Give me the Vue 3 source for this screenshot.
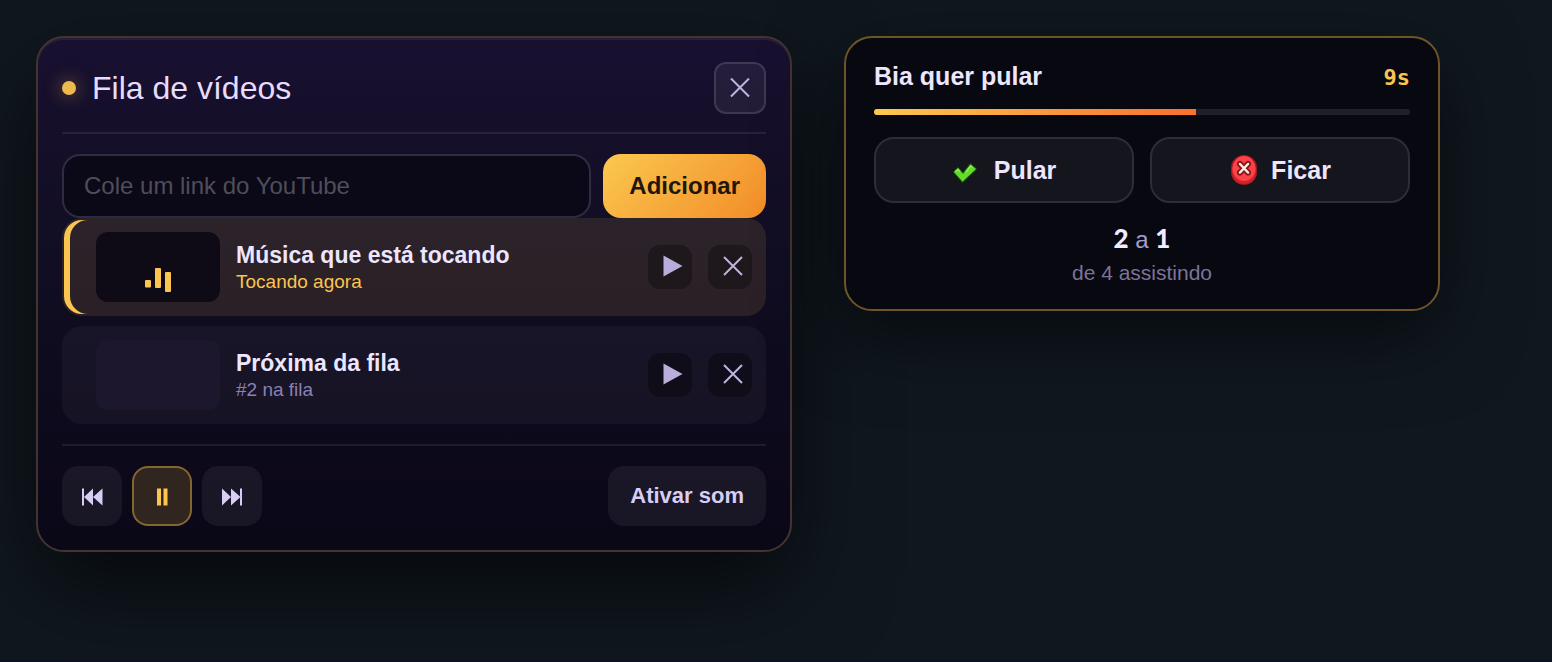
<script setup>
import { ref } from 'vue'

const link = ref('')
const videos = [
  { id: 1, title: 'Música que está tocando', note: 'Tocando agora', playing: true },
  { id: 2, title: 'Próxima da fila', note: '#2 na fila', playing: false },
]
const share = 60
</script>

<template>
  <main class="stage">
    <section class="card queue" aria-labelledby="queue-title">
      <header class="head">
        <span class="dot"></span>
        <h1 id="queue-title">Fila de vídeos</h1>
        <button class="close" type="button" aria-label="Fechar">
          <svg width="20" height="20" viewBox="0 0 20 20"><path class="cross" d="M1 .5 19 18.500M19 .5 1 18.500" /></svg>
        </button>
      </header>

      <form class="add" @submit.prevent>
        <input v-model="link" type="text" placeholder="Cole um link do YouTube" aria-label="Link do YouTube" />
        <button type="submit">Adicionar</button>
      </form>

      <ul class="list">
        <li v-for="v in videos" :key="v.id" class="item" :class="{ playing: v.playing }">
          <div class="thumb">
            <svg v-if="v.playing" width="26" height="24" viewBox="0 0 26 24">
              <rect x="0" y="12" width="6" height="7.500" rx="1" />
              <rect x="10" y="0" width="6" height="20" rx="1" />
              <rect x="20" y="4" width="6" height="20" rx="1" />
            </svg>
          </div>
          <div class="info">
            <p class="title">{{ v.title }}</p>
            <p class="note">{{ v.note }}</p>
          </div>
          <button class="mini" type="button" aria-label="Tocar">
            <svg width="20" height="22" viewBox="0 0 20 22"><path class="solid" d="M.5 0.500V21.500L19.500 11Z" /></svg>
          </button>
          <button class="mini" type="button" aria-label="Remover">
            <svg width="20" height="20" viewBox="0 0 20 20"><path class="cross" d="M1 1 19 19M19 1 1 19" /></svg>
          </button>
        </li>
      </ul>

      <footer class="controls">
        <button class="ctl" type="button" aria-label="Anterior">
          <svg width="22" height="18" viewBox="0 0 22 18"><path d="M1 .5H3V17.500H1ZM12 .5V17.500L3 9ZM21.500 .5V17.500L12 9Z" /></svg>
        </button>
        <button class="ctl active" type="button" aria-label="Pausar">
          <svg width="22" height="18" viewBox="0 0 22 18"><path d="M6 .5H10V17.500H6ZM12.500 .5H16.500V17.500H12.500Z" /></svg>
        </button>
        <button class="ctl" type="button" aria-label="Próximo">
          <svg width="22" height="18" viewBox="0 0 22 18"><path d="M1 .5V17.500L10 9ZM10 .5V17.500L19.500 9ZM19 .5H21V17.500H19Z" /></svg>
        </button>
        <button class="sound" type="button">Ativar som</button>
      </footer>
    </section>

    <section class="card vote" aria-labelledby="vote-title">
      <header class="vote-head">
        <h2 id="vote-title">Bia quer pular</h2>
        <span class="time">9s</span>
      </header>
      <div class="bar"><div class="fill" :style="{ width: share + '%' }"></div></div>
      <div class="choices">
        <button type="button">
          <svg width="30" height="30" viewBox="0 0 30 30">
            <path d="M1.500 17 6 12.500 11 18 18.500 8.500 24.500 14 10.500 27.500Z" fill="#1f5a12" stroke="#1f5a12" stroke-width="1" stroke-linejoin="round" />
            <path d="M2 17 6 13 11 19 18.500 9.500 24 14 10.500 26.500Z" fill="#62dc28" />
            <path d="M3.500 16.500 6 14.500 8 16.500M14 17 18.500 11 20.500 12.500" fill="none" stroke="#8cee58" stroke-width="1.500" />
          </svg>
          <span>Pular</span>
        </button>
        <button type="button">
          <svg width="30" height="30" viewBox="0 0 30 30">
            <rect x="2" y="0" width="26" height="30" rx="13" fill="#a5171e" />
            <rect x="3" y="3" width="24" height="26" rx="12" fill="#cf2229" />
            <ellipse cx="15" cy="13.500" rx="11.500" ry="12.500" fill="#fb4247" />
            <path d="M11 9 19 17.500M19 9 11 17.500" stroke="#86141b" stroke-width="6" stroke-linecap="round" />
            <path d="M11 9 19 17.500M19 9 11 17.500" stroke="#fbeedd" stroke-width="2.500" stroke-linecap="round" />
          </svg>
          <span>Ficar</span>
        </button>
      </div>
      <p class="count"><b>2</b> a <b>1</b></p>
      <p class="watching">de 4 assistindo</p>
    </section>
  </main>
</template>

<style>
body {
  background: #10181f;
}
</style>

<style scoped>
.stage {
  box-sizing: border-box;
  min-height: 100vh;
  padding: 36px;
  display: grid;
  grid-template-columns: minmax(0, 756px) minmax(0, 596px);
  align-items: start;
  gap: 52px;
  overflow: hidden;
  border-bottom: 2px solid #0d1020;
  background: #10181f;
  color: #ece6ff;
  font-family: "Liberation Sans", Arial, sans-serif;
}
h1, h2, p, ul {
  margin: 0;
  padding: 0;
}
button {
  box-sizing: border-box;
  margin: 0;
  padding: 0;
  border: 0;
  font-family: inherit;
  color: inherit;
  cursor: pointer;
}
svg {
  display: block;
  flex: none;
}
.card {
  box-sizing: border-box;
  border: 2px solid #43342f;
  border-radius: 28px;
}
.queue {
  padding: 24px;
  background: linear-gradient(180deg, #181030 0%, #120e24 38%, #0a0717 100%);
  box-shadow: 0 36px 96px rgba(0, 0, 0, 0.65), inset 0 2px 0 rgba(255, 255, 255, 0.06);
}
.head {
  display: flex;
  align-items: center;
  gap: 16px;
  padding-bottom: 18px;
  border-bottom: 2px solid rgba(255, 255, 255, 0.08);
  margin-bottom: 20px;
}
.dot {
  width: 14px;
  height: 14px;
  border-radius: 50%;
  background: #edbb4c;
  box-shadow: 0 0 18px rgba(251, 197, 79, 0.5);
}
h1 {
  flex: 1;
  font-size: 32px;
  line-height: 40px;
  font-weight: 400;
  color: #e6dcff;
}
.close {
  width: 52px;
  height: 52px;
  display: grid;
  place-items: center;
  border: 2px solid rgba(255, 255, 255, 0.12);
  border-radius: 12px;
  background: rgba(255, 255, 255, 0.06);
}
.cross {
  fill: none;
  stroke: #c0b4de;
  stroke-width: 2;
}
.solid {
  fill: #b9addb;
}
.add {
  display: flex;
  gap: 12px;
}
.add input {
  box-sizing: border-box;
  flex: 1;
  min-width: 0;
  height: 64px;
  padding: 0 20px;
  border: 2px solid rgba(255, 255, 255, 0.12);
  border-radius: 18px;
  background: #0b0817;
  background-clip: padding-box;
  color: #ece6ff;
  font: 24px "Liberation Sans", Arial, sans-serif;
}
.add input::placeholder {
  color: #504d59;
  opacity: 1;
}
.add button {
  padding: 0 26px;
  border-radius: 18px;
  background: linear-gradient(135deg, #fbc84f, #f28c28);
  color: #20170a;
  font-size: 24px;
  font-weight: 700;
}
.list {
  list-style: none;
  display: flex;
  flex-direction: column;
  gap: 10px;
}
.item {
  display: flex;
  align-items: center;
  gap: 16px;
  padding: 12px 12px 12px 32px;
  border: 2px solid transparent;
  border-radius: 20px;
  background: rgba(255, 255, 255, 0.04);
}
.playing {
  background: rgba(251, 197, 79, 0.11);
  box-shadow: inset 6px 0 0 #fbc54f;
}
.thumb {
  box-sizing: border-box;
  width: 124px;
  height: 70px;
  padding-bottom: 10px;
  display: flex;
  align-items: flex-end;
  justify-content: center;
  border-radius: 12px;
  background: #1d172d;
}
.playing .thumb {
  background: #0e0b17;
}
.thumb svg {
  fill: #fbc54f;
}
.info {
  flex: 1;
  min-width: 0;
}
.title {
  font-size: 23px;
  line-height: 28px;
  font-weight: 700;
}
.note {
  font-size: 19px;
  line-height: 25px;
  color: #8a80b4;
}
.playing .note {
  color: #fbc54f;
}
.mini {
  width: 44px;
  height: 44px;
  padding: 0 0 2px 6px;
  display: grid;
  place-items: center;
  border-radius: 12px;
  background: rgba(0, 0, 0, 0.3);
}
.controls {
  display: flex;
  gap: 10px;
  margin-top: 20px;
  padding-top: 20px;
  border-top: 2px solid rgba(255, 255, 255, 0.08);
}
.ctl {
  width: 60px;
  height: 60px;
  padding-top: 2px;
  display: grid;
  place-items: center;
  border-radius: 16px;
  background: rgba(255, 255, 255, 0.06);
}
.ctl svg {
  fill: #d8cef5;
}
.active {
  border: 2px solid #84672f;
  background: #30261f;
}
.active svg {
  fill: #fbc54f;
}
.sound {
  margin-left: auto;
  padding: 0 22px;
  border-radius: 16px;
  background: rgba(255, 255, 255, 0.06);
  color: #d8cef5;
  font-size: 22px;
  font-weight: 700;
}
.vote {
  padding: 24px 28px;
  border-color: #6d5429;
  background: #080811;
  box-shadow: 0 24px 80px rgba(0, 0, 0, 0.6);
}
.vote-head {
  display: flex;
  justify-content: space-between;
  align-items: baseline;
  margin-bottom: 18px;
}
h2 {
  font-size: 25px;
  line-height: 29px;
  font-weight: 700;
}
.time {
  font: 700 22px/24px "DejaVu Sans Mono", monospace;
  color: #fbc54f;
}
.bar {
  height: 6px;
  margin-bottom: 22px;
  border-radius: 3px;
  overflow: hidden;
  background: #212028;
}
.fill {
  height: 100%;
  background: linear-gradient(90deg, #fbc84f, #f9702d);
}
.choices {
  display: grid;
  grid-template-columns: 1fr 1fr;
  gap: 16px;
  margin-bottom: 22px;
}
.choices button {
  height: 66px;
  display: flex;
  align-items: center;
  justify-content: center;
  gap: 12px;
  border: 2px solid #2e2d37;
  border-radius: 20px;
  background: #15151e;
  font-size: 25px;
  font-weight: 700;
}
.count {
  margin-bottom: 6px;
  text-align: center;
  font-size: 24px;
  line-height: 30px;
  color: #a79ccb;
}
.count b {
  font: 900 26px/24px Lato, sans-serif;
  color: #f1ecff;
}
.watching {
  text-align: center;
  font-size: 21px;
  line-height: 24px;
  color: #7d7399;
}
</style>
